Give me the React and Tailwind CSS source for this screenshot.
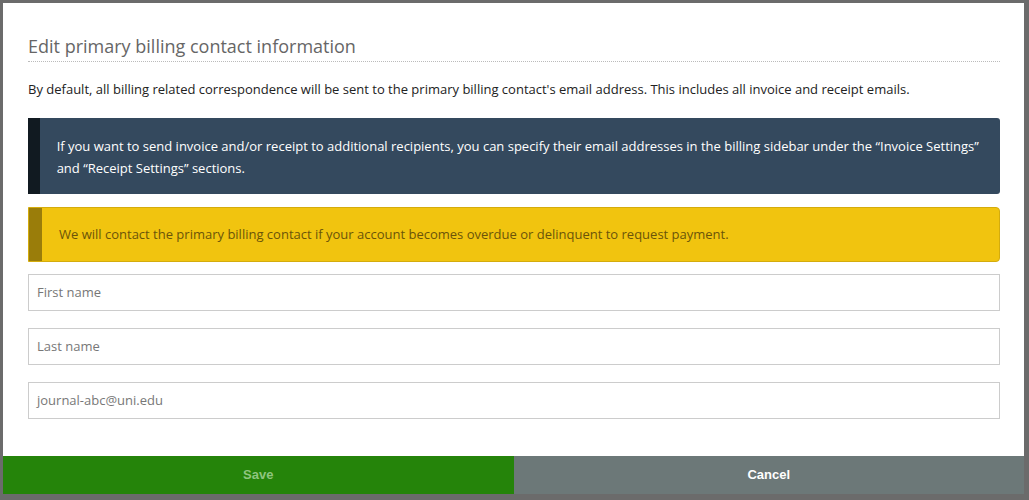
export default function App() {
  const f = { fontFamily: '"Open Sans", "Liberation Sans", sans-serif' };
  return (
    <div className="w-[1029px] h-[500px] bg-[#6b6b6b] p-[3px] pr-[5px] pb-[6px]" style={f}>
      <div className="bg-white h-full flex flex-col">
        <div className="flex-1 pl-[25px] pr-[24px] pt-[31px]">
          <h1 className="text-[18px] text-[#666] leading-[24px] pb-[3px] border-b border-dotted border-[#bbb]">Edit primary billing contact information</h1>
          <p className="text-[13px] text-[#222] mt-[18px] leading-[18px]">By default, all billing related correspondence will be sent to the primary billing contact's email address. This includes all invoice and receipt emails.</p>
          <div className="mt-[20px] flex bg-[#34495e] rounded-r-[3px] overflow-hidden h-[76px]">
            <div className="w-[14px] bg-[#111a21]" />
            <div className="px-[17px] py-[17px] text-[13px] text-white leading-[22px]">If you want to send invoice and/or receipt to additional recipients, you can specify their email addresses in the billing sidebar under the “Invoice Settings” and “Receipt Settings” sections.</div>
          </div>
          <div className="mt-[13px] flex bg-[#f1c40f] border border-[#d4ac0d] rounded-r-[4px] overflow-hidden h-[55px]">
            <div className="w-[13px] bg-[#9a7d0a]" />
            <div className="px-[17px] flex items-center text-[13px] text-[#6b5409]">We will contact the primary billing contact if your account becomes overdue or delinquent to request payment.</div>
          </div>
          <div className="mt-[12px] flex flex-col gap-[17px]">
            {["First name", "Last name", "journal-abc@uni.edu"].map((p) => (
              <div key={p} className="h-[37px] border border-[#ccc] flex items-center px-[8px] text-[13px] text-[#777]">{p}</div>
            ))}
          </div>
        </div>
        <div className="flex h-[38px] text-[13px] font-semibold" style={{ fontFamily: '"Liberation Sans", sans-serif' }}>
          <div className="w-1/2 bg-[#25840a] text-[#8fc57f] flex items-center justify-center">Save</div>
          <div className="w-1/2 bg-[#6c7878] text-white flex items-center justify-center">Cancel</div>
        </div>
      </div>
    </div>
  );
}
